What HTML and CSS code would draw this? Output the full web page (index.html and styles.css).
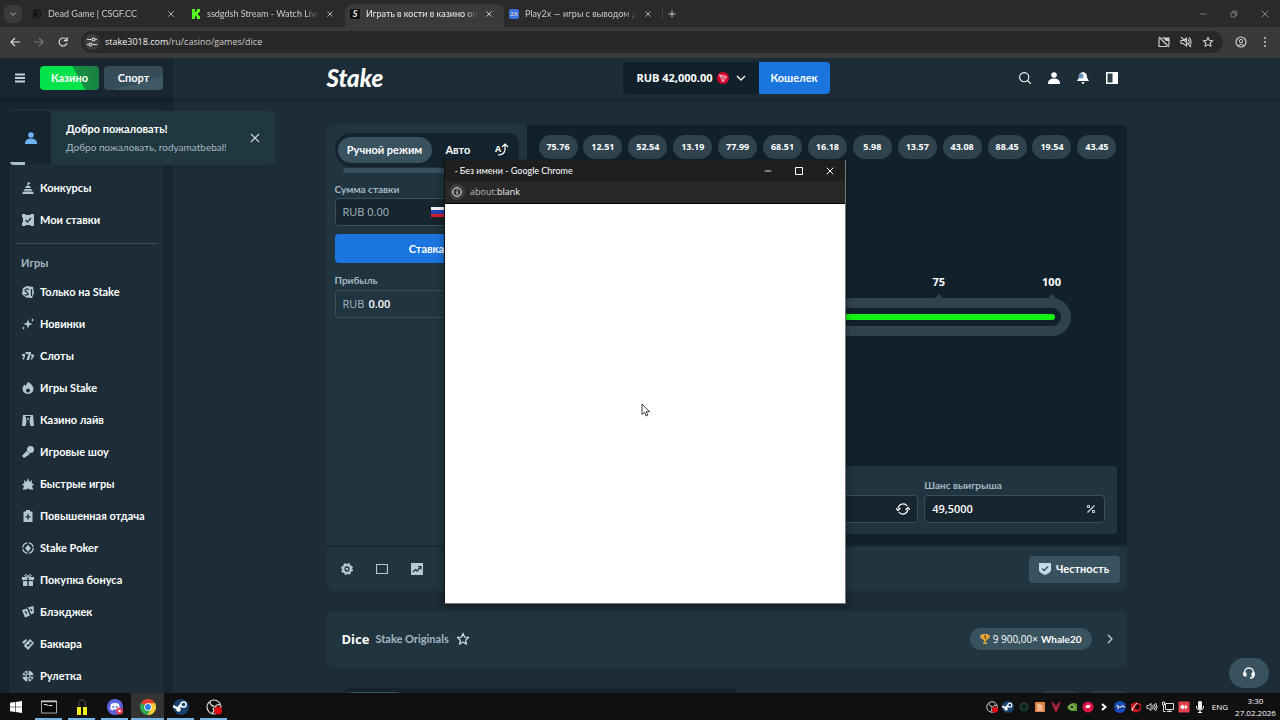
FILE: index.html
```html
<!DOCTYPE html>
<html lang="ru">

<head>
    <meta charset="UTF-8">
    <meta name="viewport" content="width=device-width, initial-scale=1.0">
    <title>Играть в кости в казино онлайн</title>
    <link rel="stylesheet" href="styles.css">
</head>

<body>
    <!-- shared icons -->
    <svg class="sprite" aria-hidden="true">
        <symbol id="i-close" viewBox="0 0 12 12"><path d="M2 2l8 8M10 2l-8 8" fill="none" stroke="currentColor" stroke-width="1.2"/></symbol>
        <symbol id="i-min" viewBox="0 0 12 12"><path d="M2 6h8" stroke="currentColor"/></symbol>
        <symbol id="i-chev" viewBox="0 0 12 12"><path d="M2 4l4 4 4-4" fill="none" stroke="currentColor" stroke-width="1.3"/></symbol>
        <symbol id="i-star" viewBox="0 0 12 12"><path d="M6 1.2l1.4 3.2 3.4.3-2.6 2.3.8 3.4L6 8.6l-3 1.8.8-3.4L1.2 4.7l3.4-.3z" fill="none" stroke="currentColor" stroke-width="1.1" stroke-linejoin="round"/></symbol>
        <symbol id="i-user" viewBox="0 0 12 12"><circle cx="6" cy="3" r="2.8"/><path d="M0 12c0-4 2.500-5.400 6-5.400S12 8 12 12z"/></symbol>
        <symbol id="i-steam" viewBox="0 0 16 16"><circle cx="8" cy="8" r="8" fill="#17426f"/><path d="M0 7l5 2.500 3-4" stroke="#fff" stroke-width="2.500" fill="none"/><circle cx="10.500" cy="5.500" r="2.600" fill="#17426f" stroke="#fff" stroke-width="1.500"/><circle cx="5.500" cy="10.500" r="2.200" fill="#fff"/></symbol>
        <symbol id="i-obs" viewBox="0 0 16 16"><circle cx="8" cy="8" r="7" fill="#111" stroke="#ddd" stroke-width="1.200"/><path d="M4 3c0 3 2 4 4.500 4.500M14 6c-3-1-4 0-5 3M6 14c2-1 2.500-3 1-5" fill="none" stroke="#ddd" stroke-width="1.300"/><circle cx="12" cy="11.500" r="4" fill="#e00b14"/></symbol>
    </svg>

    <div class="tabstrip">
        <button class="tab-search" aria-label="Поиск вкладок"><svg class="ico8"><use href="#i-chev"/></svg></button>
        <div class="tabs">
            <div class="tab">
                <svg class="favicon" viewBox="0 0 10 10"><path d="M1 2l4-2 4 2v6L5 10 1 8z" fill="#151515"/><path d="M3 3h4v4H5v2" stroke="#333" fill="none"/></svg>
                <span class="tab-title">Dead Game | CSGF.CC</span>
                <button class="tab-close" aria-label="Закрыть"><svg class="ico8"><use href="#i-close"/></svg></button>
            </div>
            <div class="tab">
                <svg class="favicon" viewBox="0 0 10 10"><path d="M1 0h3v3h1V2h1V0h3v3H8v1H7v2h1v1h1v3H6V8H5V7H4v3H1z" fill="#53fc18"/></svg>
                <span class="tab-title">ssdgdsh Stream - Watch Live o</span>
                <button class="tab-close" aria-label="Закрыть"><svg class="ico8"><use href="#i-close"/></svg></button>
            </div>
            <div class="tab active">
                <span class="favicon fav-stake">S</span>
                <span class="tab-title">Играть в кости в казино онла</span>
                <button class="tab-close" aria-label="Закрыть"><svg class="ico8"><use href="#i-close"/></svg></button>
            </div>
            <div class="tab">
                <span class="favicon fav-2x">2X</span>
                <span class="tab-title">Play2x — игры с выводом ден</span>
                <button class="tab-close" aria-label="Закрыть"><svg class="ico8"><use href="#i-close"/></svg></button>
            </div>
        </div>
        <button class="new-tab" aria-label="Новая вкладка"><svg class="ico10" viewBox="0 0 12 12"><path d="M6 2v8M2 6h8" stroke="currentColor" stroke-width="1.2"/></svg></button>
        <div class="win-controls">
            <button aria-label="Свернуть"><svg class="ico10"><use href="#i-min"/></svg></button>
            <button aria-label="Восстановить"><svg class="ico10" viewBox="0 0 12 12"><path d="M2.500 4.500h5v5h-5zM4.500 4.500v-2h5v5h-2" fill="none" stroke="currentColor"/></svg></button>
            <button aria-label="Закрыть окно"><svg class="ico10"><use href="#i-close"/></svg></button>
        </div>
    </div>

    <div class="toolbar">
        <button aria-label="Назад"><svg class="ico12" viewBox="0 0 12 12"><path d="M11 6H2M6 2L2 6l4 4" fill="none" stroke="#ddd" stroke-width="1.200"/></svg></button>
        <button aria-label="Вперёд"><svg class="ico12" viewBox="0 0 12 12"><path d="M1 6h9M6 2l4 4-4 4" fill="none" stroke="#777" stroke-width="1.200"/></svg></button>
        <button aria-label="Обновить"><svg class="ico12" viewBox="0 0 12 12"><path d="M9.600 4A4 4 0 1 0 10 7M10.200 1.200v3.400H6.800" fill="none" stroke="#ddd" stroke-width="1.200"/></svg></button>
        <div class="omnibox">
            <span class="site-info"><svg class="ico12" viewBox="0 0 12 12"><path d="M1 3.500h4M9.500 3.500H11M1 8.500h1.500M7 8.500h4" stroke="#ddd" stroke-width="1.200"/><circle cx="7.500" cy="3.500" r="1.500" fill="none" stroke="#ddd" stroke-width="1.200"/><circle cx="4.500" cy="8.500" r="1.500" fill="none" stroke="#ddd" stroke-width="1.200"/></svg></span>
            <span class="url"><b>stake3018.com</b>/ru/casino/games/dice</span>
            <svg class="ico12" viewBox="0 0 12 12"><path d="M1 2.500v8h8M3.500 2H11v7.500M1 1l10 10" fill="none" stroke="#ccc" stroke-width="1.200"/><path d="M5 2h6v3H8z" fill="#ccc"/></svg>
            <svg class="ico12" viewBox="0 0 12 12"><path d="M1 4.500h2L6.500 2v8L3 7.500H1zM8 3.500q2.500 2.500 0 5M9 1.500q4 4 .5 8.500M1 1l10 10" fill="none" stroke="#ccc" stroke-width="1.100"/></svg>
            <svg class="ico12"><use href="#i-star"/></svg>
        </div>
        <button aria-label="Профиль"><svg class="ico12" viewBox="0 0 12 12"><circle cx="6" cy="6" r="5" fill="none" stroke="#ccc" stroke-width="1.200"/><circle cx="6" cy="5" r="1.700" fill="none" stroke="#ccc"/><path d="M3 9.500q3-2.500 6 0" fill="none" stroke="#ccc"/></svg></button>
        <button aria-label="Меню"><svg class="ico12" viewBox="0 0 12 12"><circle cx="6" cy="2" r="1" fill="#ccc"/><circle cx="6" cy="6" r="1" fill="#ccc"/><circle cx="6" cy="10" r="1" fill="#ccc"/></svg></button>
    </div>

    <div class="site">
        <aside class="sidebar">
            <div class="sidebar-head">
                <button class="burger" aria-label="Меню"><svg class="ico10" viewBox="0 0 10 10"><path d="M0 1.500h10M0 5h10M0 8.500h10" stroke="#c3d3dc" stroke-width="2"/></svg></button>
                <a href="#" class="mode casino">Казино</a>
                <a href="#" class="mode sport">Спорт</a>
            </div>
            <nav class="sidebar-nav">
                <a href="#"><svg viewBox="0 0 12 12"><path d="M5.500 0L9 1.200 6.500 2.400V4H8l1 2H3l1-2h1.500zM2.600 7h6.800l.8 1.800H1.800zM1.400 9.600h9.200L12 12H0z"/></svg>Конкурсы</a>
                <a href="#"><svg viewBox="0 0 12 12"><path d="M0 0h3l1 1h4l1-1h3v12H9l-1-1H4l-1 1H0V9l1-1V4L0 3z"/><path d="M3.500 6l2 2 3.500-4" class="cut"/></svg>Мои ставки</a>
                <hr>
                <h2>Игры</h2>
                <a href="#"><svg viewBox="0 0 12 12"><path d="M1 2l4-2 6 1 1 6-2 5-6-.5L0 8z"/><path d="M7 3.500C4 2 1.500 4.500 4.500 6S6 10 2.500 8.500M9.500 3v7" class="cut"/></svg>Только на Stake</a>
                <a href="#"><svg viewBox="0 0 12 12"><path d="M6 1.500l1.200 3.300 3.300 1.200-3.300 1.200L6 10.500 4.800 7.200 1.500 6l3.300-1.200zM10.500 0l.5 1.500 1 .5-1 .5-.5 1.500-.5-1.500L9 2l1-.5zM1.500 8.500l.5 1 1 .5-1 .5-.5 1.500-.5-1.500L0 10l1-.5z"/></svg>Новинки</a>
                <a href="#"><svg viewBox="0 0 12 12"><path d="M3.500 2H9v1.500L7 10H4.500l2-6h-3zM0 4h3v2L2 9.500H.5L1.500 6H0zM9 4.500h3V6L10 9.500H8.500L10 6H9z"/></svg>Слоты</a>
                <a href="#"><svg viewBox="0 0 12 12"><path d="M5.500 0c3 1 6 4 6 7A5.500 5 0 0 1 .5 7c0-2 1-3.500 2-4.500l1 1.500C4 2.500 5.500 2 5.500 0z"/><circle cx="6" cy="8.500" r="2" class="hole"/></svg>Игры Stake</a>
                <a href="#"><svg viewBox="0 0 12 12"><path d="M1 1h10l1 11H8.500L7.500 8 8 3.500 9 2H3l1 1.500L4.500 8l-1 4H0z"/><path d="M5 4h2L6 7z"/></svg>Казино лайв</a>
                <a href="#"><svg viewBox="0 0 12 12"><circle cx="8.500" cy="3.500" r="3.500"/><path d="M4.500 5L8 8l-6 4-2-2z"/></svg>Игровые шоу</a>
                <a href="#"><svg viewBox="0 0 12 12"><path d="M6 0l1.500 4L10 2l-.3 3.500L12 6l-2 2.500 1.500 3H7.500Q6 9.500 4.500 11.500H.5l1.500-3L0 6l2.300-.5L2 2l2.500 2z"/></svg>Быстрые игры</a>
                <a href="#"><svg viewBox="0 0 12 12"><path d="M4 0h4v1.500h2.500V12h-9V1.500H4z"/><path d="M6 4v5.500M3.500 6.800h5" class="cut"/></svg>Повышенная отдача</a>
                <a href="#"><svg viewBox="0 0 12 12"><circle cx="6" cy="6" r="5.200" fill="none" stroke="currentColor" stroke-width="1.300" stroke-dasharray="6.600 1.560"/><path d="M6 2.700l3 3.500-1.500 1.800H7l.5 1.300h-3L5 8h-.5L3 6.200z"/></svg>Stake Poker</a>
                <a href="#"><svg viewBox="0 0 12 12"><path d="M0 3h5.300v3H0zM6.700 3H12v3H6.700zM1 7h4.300v5H1zM6.700 7H11v5H6.700z"/><path d="M6 3C2 3 2 .5 4 .7S6 3 6 3s0-2 2-2.300S10 3 6 3z" fill="none" stroke="currentColor"/></svg>Покупка бонуса</a>
                <a href="#"><svg viewBox="0 0 12 12"><path d="M0 4l5-1.500L8 9.500l-5 2zM5.500 1.500L11.500 0l.5 7-3 1.500L7 3z"/><path d="M3 5l2 3M8.500 3l1.500 2" class="cut"/></svg>Блэкджек</a>
                <a href="#"><svg viewBox="0 0 12 12"><path d="M0 4l4-3 1 1.500L2 6zM2.500 6.500L8 1l4 4-6 7-4-4z"/><path d="M5 7l1.500 1.500M8 4l1.500 1.500M6 8l3-3" class="cut"/></svg>Баккара</a>
                <a href="#"><svg viewBox="0 0 12 12"><circle cx="6" cy="6" r="5.500"/><path d="M6 0v3.500M6 8.500V12M0 6h3.500M8.500 6H12M2.500 2.500l1.800 1.800M7.700 7.700l1.800 1.800" class="cut"/><circle cx="6" cy="6" r="1.500" class="hole"/></svg>Рулетка</a>
            </nav>
        </aside>

        <div class="page">
            <header class="site-header">
                <div class="wrap header-row">
                    <a href="#" class="logo">Stake</a>
                    <div class="wallet">
                        <button class="balance">RUB 42,000.00
                            <svg class="ico12" viewBox="0 0 12 12"><circle cx="6" cy="6" r="6" fill="#d5042f"/><path d="M2.500 3l6 1.200 1.200 1L6 9.800zM6 9.500l.2-4 3-.8M2.500 3l3.700 2.500" fill="none" stroke="#fff" stroke-width=".7"/></svg>
                            <svg class="ico12"><use href="#i-chev"/></svg>
                        </button>
                        <button class="wallet-btn">Кошелек</button>
                    </div>
                    <div class="header-icons">
                        <button aria-label="Поиск"><svg class="ico12" viewBox="0 0 12 12"><circle cx="5.200" cy="5.200" r="4.600" fill="none" stroke="#fff" stroke-width="1.100"/><path d="M8.500 8.500L12 12" stroke="#fff" stroke-width="1.200"/></svg></button>
                        <button aria-label="Профиль"><svg class="ico12 white"><use href="#i-user"/></svg></button>
                        <button aria-label="Уведомления"><svg class="ico12" viewBox="0 0 12 12"><path d="M6 0c3 .5 4 2.500 4 5.500L12 9H0l2-3.500C2 2.500 3 .5 6 0zM4.500 10h3q-1.500 4-3 0z" fill="#fff"/><circle cx="4" cy="4" r="2.500" fill="#6a93c0"/></svg></button>
                        <button aria-label="Панель"><svg class="ico12" viewBox="0 0 12 12"><path d="M0 0h12v12H0z" fill="#fff"/><path d="M1.500 1.500h5v9h-5z" fill="#2c3f4a"/></svg></button>
                    </div>
                </div>
            </header>

            <main class="wrap main">
                <section class="game">
                    <div class="bet-panel">
                        <div class="bet-tabs">
                            <button class="pill">Ручной режим</button>
                            <button class="auto">Авто</button>
                            <button class="swap" aria-label="Расширенный режим"><svg viewBox="0 0 14 14"><text x="0" y="9">A</text><path d="M7 4l3-3 3 3M10 1v5q0 6-7 6" fill="none" stroke="#fff" stroke-width="1.200"/></svg></button>
                        </div>
                        <div class="hscroll"></div>
                        <label for="bet">Сумма ставки</label>
                        <div class="field">
                            <input id="bet" type="text" class="muted" value="RUB 0.00">
                            <span class="flag"></span>
                        </div>
                        <button class="bet-btn">Ставка</button>
                        <label for="profit">Прибыль</label>
                        <div class="field readonly"><span class="muted">RUB</span><output id="profit">0.00</output></div>
                    </div>
                    <div class="board">
                        <div class="results">
                            <button>75.76</button><button>12.51</button><button>52.54</button><button>13.19</button><button>77.99</button><button>68.51</button><button>16.18</button><button>5.98</button><button>13.57</button><button>43.08</button><button>88.45</button><button>19.54</button><button>43.45</button>
                        </div>
                        <div class="dice">
                            <div class="scale"><span>0</span><span>25</span><span>50</span><span>75</span><span>100</span></div>
                            <div class="rail"><input type="range" min="0" max="100" value="50" aria-label="Порог"></div>
                        </div>
                        <div class="params">
                            <div>
                                <label for="mult">Множитель</label>
                                <div class="field"><input id="mult" type="text" value="2,0000"><span>×</span></div>
                            </div>
                            <div>
                                <label for="roll">Бросок больше</label>
                                <div class="field"><input id="roll" type="text" value="50,50"><svg class="ico14" viewBox="0 0 14 14"><path d="M2.200 6.500a5 5 0 0 1 9-2.500M11.800 7.500a5 5 0 0 1-9 2.500M0 6l2 2.500L4.500 6M9.500 8L12 5.500 14 8" fill="none" stroke="#fff" stroke-width="1.200"/></svg></div>
                            </div>
                            <div>
                                <label for="chance">Шанс выигрыша</label>
                                <div class="field"><input id="chance" type="text" value="49,5000"><svg class="ico12" viewBox="0 0 12 12"><path d="M2.500 9.500l7-7" stroke="#ccd6dc" stroke-width="1.300"/><path d="M2.500 2.500h2v2h-2zM7.500 7.500h2v2h-2z" fill="none" stroke="#ccd6dc"/></svg></div>
                            </div>
                        </div>
                    </div>
                    <div class="game-footer">
                        <button aria-label="Настройки"><svg class="ico12" viewBox="0 0 12 12"><circle cx="6" cy="6" r="5" fill="#b3c9d5"/><circle cx="6" cy="6" r="5.200" fill="none" stroke="#b3c9d5" stroke-width="1.600" stroke-dasharray="2.400 1.680"/><circle cx="6" cy="6" r="2" fill="none" stroke="#20353f" stroke-width="1.300"/></svg></button>
                        <button aria-label="Режим театра"><svg class="ico12" viewBox="0 0 12 12"><path d="M.5 1.500h11v9H.5z" fill="none" stroke="#b3c9d5" stroke-width="1.200"/></svg></button>
                        <button aria-label="Статистика"><svg class="ico12" viewBox="0 0 12 12"><path d="M0 0h12v12H0z" fill="#b3c9d5"/><path d="M2 9l2.500-2.500L6 8l3.500-4M7 3.500h3v3" fill="none" stroke="#20353f" stroke-width="1.200"/></svg></button>
                        <button class="fair"><svg class="ico12" viewBox="0 0 12 12"><path d="M0 0h12v7.500Q11 10 6 12 1 10 0 7.500z" fill="#c3dbe8"/><path d="M3 5.500l2.200 2L9 3.500" fill="none" stroke="#385260" stroke-width="1.300"/></svg>Честность</button>
                    </div>
                </section>

                <section class="info">
                    <h1>Dice</h1>
                    <a href="#">Stake Originals</a>
                    <button class="fav" aria-label="В избранное"><svg class="ico14"><use href="#i-star"/></svg></button>
                    <button class="record"><svg class="ico10" viewBox="0 0 10 10"><path d="M2 0h6v1h2q0 4-3 4.500L5.700 7v1.500H7V10H3V8.500h1.300V7L3 5.500Q0 5 0 1h2z" fill="#e5a33c"/><path d="M4.300 2.200l1-.7V5" stroke="#64320e" fill="none"/></svg><span>9 900,00×</span><b>Whale20</b></button>
                    <button class="next" aria-label="Развернуть"><svg class="ico10" viewBox="0 0 10 10"><path d="M3 1l4 4-4 4" fill="none" stroke="currentColor" stroke-width="1.200"/></svg></button>
                </section>

                <section class="bottom-row">
                    <div class="bottom-tabs"><span></span></div>
                    <div class="bottom-nav"><i></i><i></i></div>
                </section>
            </main>
        </div>

        <div class="toast" role="status">
            <div class="toast-icon"><svg class="ico12 blue"><use href="#i-user"/></svg><i></i></div>
            <div class="toast-text"><strong>Добро пожаловать!</strong><span>Добро пожаловать, rodyamatbebal!</span></div>
            <button aria-label="Закрыть"><svg class="ico12"><use href="#i-close"/></svg></button>
        </div>

        <button class="support" aria-label="Поддержка"><svg class="ico12" viewBox="0 0 12 12"><path d="M1.500 7V5.500a4.500 4.500 0 0 1 9 0V9q0 2-3.500 2" fill="none" stroke="#fff" stroke-width="1.500"/><path d="M0 5.500h3.500v4H2q-2 0-2-2zM8.500 5.500H12v2q0 2-2 2H8.500z" fill="#fff"/></svg></button>
    </div>

    <div class="popup">
        <div class="popup-title">
            <span>· Без имени - Google Chrome</span>
            <button aria-label="Свернуть"><svg class="ico10"><use href="#i-min"/></svg></button>
            <button aria-label="Развернуть"><svg class="ico10" viewBox="0 0 10 10"><path d="M1.500 1.500h7v7h-7z" fill="none" stroke="currentColor"/></svg></button>
            <button aria-label="Закрыть"><svg class="ico10"><use href="#i-close"/></svg></button>
        </div>
        <div class="popup-address">
            <span class="site-info"><svg class="ico10" viewBox="0 0 10 10"><circle cx="5" cy="5" r="4.300" fill="none" stroke="#eee"/><path d="M5 4.500v3M5 2.500v1" stroke="#eee"/></svg></span>
            <span>about:<b>blank</b></span>
        </div>
        <div class="popup-body"></div>
    </div>

    <svg class="cursor" viewBox="0 0 10 14"><path d="M1 1v10.500l2.500-2.300 1.600 3.800 1.700-.8-1.600-3.500H8.500z" fill="#fff" stroke="#222" stroke-width=".9"/></svg>

    <div class="taskbar">
        <button class="start" aria-label="Пуск"><svg class="ico12" viewBox="0 0 12 12"><path d="M0 1.700l5-.7v4.700H0zM5.600.9L12 0v5.700H5.600zM0 6.300h5V11l-5-.7zM5.600 6.300H12V12l-6.400-.9z" fill="#fff"/></svg></button>
        <button class="app" aria-label="Терминал"><svg class="ico16" viewBox="0 0 16 16"><path d="M.5 2h15v12H.5z" fill="#050505" stroke="#aaa"/><path d="M0 2.500h16" stroke="#ccc" stroke-width="1.500"/><path d="M3 5.500h2M6 5v2M7.500 6.500h4" stroke="#eee"/></svg></button>
        <button class="app" aria-label="Hands"><svg class="ico16" viewBox="0 0 16 16"><path d="M3 8h4v8H3zM9 8h4v8H9z" fill="#f4ee12"/><path d="M5 7Q4 1 8 1t3 6" fill="none" stroke="#555"/></svg></button>
        <button class="app" aria-label="Discord"><svg class="ico16" viewBox="0 0 16 16"><circle cx="8" cy="8" r="8" fill="#5a62dd"/><path d="M4 5q4-2 8 0l1 5-2.500 1.500-1-1h-3l-1 1L3 10z" fill="#fff"/><circle cx="6.200" cy="8" r="1" fill="#5a62dd"/><circle cx="9.600" cy="8" r="1" fill="#5a62dd"/><circle cx="12.500" cy="12" r="3.500" fill="#ed3d55"/><circle cx="12.500" cy="12" r="1.300" fill="#fff"/></svg></button>
        <button class="app current" aria-label="Chrome"><svg class="ico16" viewBox="0 0 16 16"><circle cx="8" cy="8" r="8" fill="#2da94f"/><path d="M8 8L1.100 4A8 8 0 0 1 15 4z" fill="#e33b2e"/><path d="M8 4.200h7A8 8 0 0 1 7.500 16L11 9.500z" fill="#fcc934"/><circle cx="8" cy="8" r="3.800" fill="#fff"/><circle cx="8" cy="8" r="2.900" fill="#2f7de1"/></svg></button>
        <button class="app" aria-label="Steam"><svg class="ico16"><use href="#i-steam"/></svg></button>
        <button class="app" aria-label="OBS"><svg class="ico16"><use href="#i-obs"/></svg></button>
        <div class="tray">
            <svg class="ico12"><use href="#i-obs"/></svg>
            <svg class="ico12"><use href="#i-steam"/></svg>
            <svg class="ico12" viewBox="0 0 12 12"><circle cx="6" cy="6" r="4" fill="#15251d" stroke="#1b5836"/></svg>
            <svg class="ico12" viewBox="0 0 12 12"><path d="M1 1h10v10H1z" fill="#e08142"/><path d="M3 9h6M4 7h4V5H4zM6 5V3M3 4l2-1" fill="none" stroke="#ffe6cf"/></svg>
            <svg class="ico12" viewBox="0 0 12 12"><path d="M1 1l3 1 2 3 2-3 3-1-2 5-3 6-3-6z" fill="#a32336"/></svg>
            <svg class="ico12" viewBox="0 0 12 12"><path d="M1 6q5-6 10-3v7H6Q2 9 1 6z" fill="#5c9a2c"/><circle cx="6" cy="6" r="2" fill="#111" stroke="#b5de85"/></svg>
            <svg class="ico12" viewBox="0 0 12 12"><circle cx="6" cy="6" r="5.500" fill="#dc1444"/><path d="M3.500 7l1-3h4l-1 3z" fill="#fff"/></svg>
            <svg class="ico12" viewBox="0 0 12 12"><path d="M4 3l3.500 3L4 9" fill="none" stroke="#fff" stroke-width="2"/></svg>
            <svg class="ico12" viewBox="0 0 12 12"><circle cx="6" cy="6" r="6" fill="#1550c0"/><path d="M1 4h10v4H1z" fill="#0a2f86"/><path d="M2 5h3v2H3M7 7V5h3v2" fill="none" stroke="#fff"/></svg>
            <svg class="ico12" viewBox="0 0 12 12"><path d="M6 1l5 2v6l-5 3-5-3V3z" fill="#c4141c"/><path d="M7 2L2 8l1 2" fill="none" stroke="#fff"/><circle cx="7.500" cy="6" r="2.500" fill="#220808"/></svg>
            <svg class="ico12" viewBox="0 0 12 12"><path d="M1 4.500h1.500L5 2.500v7L2.500 7.500H1zM6.500 4q1.500 2 0 4M8 3q2.500 3 0 6M9.500 2q3 4 0 8" fill="none" stroke="#ddd"/></svg>
            <svg class="ico12" viewBox="0 0 12 12"><path d="M3.500 2.500h8v6h-8zM7.500 8.500v2M5 10.500h5M.5 1h2v3h-2zM1.500 4v6.500h2" fill="none" stroke="#ddd"/></svg>
            <svg class="ico12" viewBox="0 0 12 12"><path d="M.5.5h11v11H.5z" fill="#e2404c"/><path d="M2 6l2.500-2.500L7 6 4.500 8.500zM7 3.500L9.500 6 7 8.500" fill="#fff"/></svg>
            <svg class="ico12" viewBox="0 0 12 12"><rect x="4" y="0" width="4" height="8" rx="1.500" fill="#fff"/><path d="M2.500 5v1.500Q3 9 6 9t3.500-2.500V5M6 9v2.500M4 11.500h4" fill="none" stroke="#fff"/></svg>
        </div>
        <span class="lang">ENG</span>
        <time class="clock"><span>3:30</span><span>27.02.2026</span></time>
    </div>
</body>

</html>
```
FILE: styles.css
```css
* {
    box-sizing: border-box;
}

body {
    margin: 0;
    height: 100vh;
    display: flex;
    flex-direction: column;
    overflow: hidden;
    position: relative;
    background: #1c2d37;
    color: #fff;
    font: 11px/16px "Lato", "Roboto", sans-serif;
}

button,
input {
    font: inherit;
    color: inherit;
    background: none;
    border: 0;
    padding: 0;
}

button {
    display: flex;
    align-items: center;
    justify-content: center;
    cursor: pointer;
    white-space: nowrap;
}

a {
    color: inherit;
    text-decoration: none;
}

svg {
    flex: none;
}

.sprite {
    position: absolute;
    width: 0;
    height: 0;
}

.ico8 { width: 8px; height: 8px; }
.ico10 { width: 10px; height: 10px; }
.ico12 { width: 12px; height: 12px; }
.ico14 { width: 14px; height: 14px; }
.ico16 { width: 16px; height: 16px; }
.white { fill: #fff; }
.blue { fill: #6cb2f5; }

/* browser chrome */
.tabstrip {
    flex: none;
    height: 27px;
    display: flex;
    align-items: center;
    background: #2a2a2a;
    color: #ccc;
    font-size: 9px;
}

.tab-search {
    width: 18px;
    height: 18px;
    margin: 0 5px 0 4px;
    border-radius: 6px;
    background: #3a3a3a;
}

.tabs {
    display: flex;
    align-self: stretch;
}

.tab {
    width: 159px;
    height: 23px;
    margin-top: 4px;
    padding: 0 10px 4px 5px;
    display: flex;
    align-items: center;
    gap: 6px;
}

.tab.active {
    background: #3a3a3a;
    border-radius: 7px 7px 0 0;
    color: #eee;
}

.favicon {
    flex: none;
    width: 10px;
    height: 10px;
}

.fav-stake {
    background: #111;
    font: italic bold 9px/10px "Lato", sans-serif;
    text-align: center;
}

.fav-2x {
    background: #3c70e0;
    border-radius: 2px;
    font: bold 6px/10px "Open Sans", sans-serif;
    text-align: center;
}

.tab-title {
    flex: 1;
    min-width: 0;
    overflow: hidden;
    white-space: nowrap;
    -webkit-mask-image: linear-gradient(90deg, #000 88%, transparent);
    mask-image: linear-gradient(90deg, #000 88%, transparent);
}

.tab-close {
    width: 10px;
}

.new-tab {
    width: 18px;
    margin-left: -1px;
    border-left: 1px solid #444;
}

.win-controls {
    margin-left: auto;
    display: flex;
    color: #888;
}

.win-controls button {
    width: 31px;
}

.toolbar {
    flex: none;
    height: 31px;
    padding: 0 9px 2px;
    display: flex;
    align-items: center;
    gap: 12px;
    background: #3a3a3a;
}

.omnibox {
    flex: 1;
    height: 22px;
    padding: 0 9px 0 3px;
    display: flex;
    align-items: center;
    gap: 10px;
    border-radius: 11px;
    background: #282828;
    color: #ccc;
    font: 9px/16px "Open Sans", sans-serif;
}

.omnibox b,
.popup b {
    font-weight: 400;
    color: #f0f0f0;
}

.site-info {
    width: 16px;
    height: 16px;
    display: flex;
    align-items: center;
    justify-content: center;
    border-radius: 8px;
    background: #3c3c3c;
}

.url {
    flex: 1;
    margin-left: -5px;
}

/* site */
.site {
    flex: 1;
    min-height: 0;
    display: flex;
    position: relative;
    overflow: hidden;
}

.sidebar {
    flex: none;
    width: 173px;
    display: flex;
    flex-direction: column;
    background: #16252e;
}

.sidebar-head {
    flex: none;
    height: 40px;
    padding-left: 15px;
    display: flex;
    align-items: center;
    gap: 5px;
    background: #172630;
    box-shadow: 0 1px 3px #101c23;
}

.burger {
    margin-right: 10px;
}

.mode {
    width: 59px;
    height: 24px;
    border-radius: 4px;
    font-weight: 700;
    line-height: 24px;
    text-align: center;
}

.casino {
    background: linear-gradient(62deg, #05e34c 62%, #139144 64%, #1b7a41);
}

.sport {
    background: linear-gradient(165deg, #354c59 65%, #3f5967 67%);
}

.sidebar-nav {
    flex: 1;
    min-height: 0;
    margin: 11px 10px 0;
    padding-top: 63px;
    overflow: hidden;
    border-radius: 4px 4px 0 0;
    background: #1c2d37;
}

.sidebar-nav a {
    height: 32px;
    padding-left: 12px;
    display: flex;
    align-items: center;
    gap: 6px;
    font-weight: 700;
    white-space: nowrap;
}

.sidebar-nav svg {
    width: 12px;
    height: 12px;
    color: #b4c8d3;
    fill: currentColor;
}

.sidebar-nav .cut {
    fill: none;
    stroke: #1c2d37;
    stroke-width: 1.3;
}

.sidebar-nav .hole {
    fill: #1c2d37;
}

.sidebar-nav hr {
    margin: 7px 6px 6px;
    border: 0;
    border-top: 1px solid #3a4f5b;
}

.sidebar-nav h2 {
    margin: 0 0 0 11px;
    font-size: 11px;
    font-weight: 700;
    line-height: 26px;
    color: #a5b8c5;
}

.page {
    flex: 1;
    min-width: 0;
}

.wrap {
    max-width: 800px;
    margin: 0 auto;
}

.site-header {
    background: #1c2d37;
    box-shadow: 0 1px 3px #15232b;
}

.header-row {
    height: 40px;
    display: grid;
    grid-template-columns: 1fr auto 1fr;
    align-items: center;
}

.logo {
    font: italic 900 24px/32px "Lato", sans-serif;
}

.wallet {
    height: 32px;
    display: flex;
    font-weight: 700;
}

.balance {
    padding: 0 12px 0 13px;
    gap: 4px;
    border-radius: 4px 0 0 4px;
    background: #11212b;
    font-family: "Open Sans", sans-serif;
}

.balance svg + svg {
    margin-left: 2px;
}

.wallet-btn {
    width: 71px;
    border-radius: 0 4px 4px 0;
    background: #1a75de;
}

.header-icons {
    display: flex;
    justify-content: flex-end;
    gap: 17px;
    padding-right: 9px;
}

.main {
    padding-top: 27px;
}

.game {
    display: grid;
    grid-template-columns: minmax(0, 1fr) minmax(0, 3fr);
    border-radius: 5px;
    overflow: hidden;
    background: #1a2c35;
}

.bet-panel {
    padding: 8px;
    background: #20353f;
}

.bet-tabs {
    height: 34px;
    padding: 0 10px 0 3px;
    display: flex;
    align-items: center;
    border-radius: 17px 10px 10px 17px;
    background: #14242e;
    font-weight: 700;
}

.pill {
    width: 94px;
    height: 26px;
    border-radius: 13px;
    background: #385260;
}

.auto {
    padding: 0 14px;
}

.swap {
    margin-left: auto;
}

.swap svg {
    width: 14px;
    height: 14px;
    fill: #fff;
    font: bold 9px "Open Sans", sans-serif;
}

.hscroll {
    height: 5px;
    margin: 1px 0 8px 8px;
    border-radius: 3px;
    background: #35505e;
}

label {
    display: block;
    height: 17px;
    font-size: 10px;
    font-weight: 700;
    line-height: 16px;
    color: #a5b8c5;
}

.field {
    height: 28px;
    padding: 0 7px;
    display: flex;
    align-items: center;
    gap: 4px;
    border: 1px solid #35505e;
    border-radius: 4px;
    background: #17252e;
    font-family: "Open Sans", sans-serif;
}

.field input {
    flex: 1;
    min-width: 0;
}

.field .muted {
    color: #a5b8c5;
}

.readonly {
    margin-top: 1px;
    background: #20353f;
    font-weight: 600;
}

.readonly .muted {
    font-weight: 400;
}

.flag {
    width: 16px;
    height: 10px;
    margin-right: 64px;
    background: linear-gradient(#f4f4f4 33%, #2443b0 33% 66%, #d21f2c 66%);
}

.bet-btn {
    width: 100%;
    height: 29px;
    margin: 8px 0 9px;
    border-radius: 4px;
    background: #1a75de;
    font-weight: 700;
}

.board {
    display: flex;
    flex-direction: column;
    padding: 10px 10px 11px 12px;
    background: #11212b;
}

.results {
    display: flex;
    justify-content: space-between;
}

.results button {
    width: 39px;
    height: 24px;
    border-radius: 12px;
    background: #2f434f;
    font: 700 9px/16px "Open Sans", sans-serif;
}

.dice {
    margin: 115px 0 130px;
    padding: 0 46px 0 43px;
    font-family: "Open Sans", sans-serif;
}

.scale {
    display: flex;
    justify-content: space-between;
    padding: 0 9px;
    font-weight: 700;
}

.scale span {
    width: 20px;
    text-align: center;
}

.scale span::after {
    content: "";
    display: block;
    width: 0;
    margin: 4px auto 0;
    border: 4px solid transparent;
    border-top-width: 0;
    border-bottom-color: #2f434f;
}

.rail {
    height: 38px;
    padding: 0 6px;
    display: flex;
    align-items: center;
    border: 10px solid #2f434f;
    border-radius: 19px;
}

.rail input {
    appearance: none;
    flex: 1;
    min-width: 0;
    height: 6px;
    margin: 0;
    border-radius: 3px;
    background: linear-gradient(90deg, #e9113c 50%, #12f312 50%);
}

.rail input::-webkit-slider-thumb {
    appearance: none;
    width: 18px;
    height: 18px;
    border-radius: 3px;
    background: #2f8af5;
}

.params {
    padding: 11px;
    display: grid;
    grid-template-columns: repeat(3, minmax(0, 1fr));
    gap: 6px;
    border-radius: 4px;
    background: #20353f;
}

.params label {
    height: 18px;
}

.params input {
    font-weight: 600;
}

.game-footer {
    grid-column: 1 / -1;
    height: 44px;
    margin-top: 2px;
    padding: 0 7px 0 14px;
    display: flex;
    align-items: center;
    gap: 23px;
    background: #20353f;
}

.fair {
    width: 91px;
    height: 27px;
    margin-left: auto;
    gap: 5px;
    border-radius: 4px;
    background: #385260;
    font-weight: 700;
}

.info {
    height: 56px;
    margin-top: 20px;
    padding: 0 12px 0 15px;
    display: flex;
    align-items: center;
    border-radius: 5px;
    background: #20353f;
}

.info h1 {
    margin: 0 6px 0 0;
    font: 700 13px/16px "Open Sans", sans-serif;
}

.info a {
    color: #a5b8c5;
    font-weight: 700;
}

.fav {
    margin-left: 7px;
    color: #c7d8e2;
}

.record {
    height: 22px;
    margin-left: auto;
    padding: 0 10px;
    gap: 3px;
    border-radius: 11px;
    background: #385260;
    font: 10px/16px "Open Sans", sans-serif;
}

.record b {
    font-family: "Lato", sans-serif;
}

.next {
    margin-left: 13px;
    color: #c7d8e2;
}

.bottom-row {
    margin-top: 21px;
    padding-left: 7px;
    display: flex;
    justify-content: space-between;
}

.bottom-tabs {
    width: 52%;
    height: 40px;
    padding: 4px;
    border-radius: 20px;
    background: #14232c;
}

.bottom-tabs span {
    display: block;
    width: 72px;
    height: 30px;
    border-radius: 15px;
    background: #385260;
}

.bottom-nav {
    display: flex;
    gap: 12px;
    padding-top: 3px;
}

.bottom-nav i {
    width: 36px;
    height: 30px;
    border-radius: 4px;
    background: #263944;
}

.toast {
    position: absolute;
    left: 10px;
    top: 53px;
    width: 265px;
    height: 54px;
    display: flex;
    align-items: center;
    border-radius: 4px;
    overflow: hidden;
    background: #20373f;
}

.toast-icon {
    align-self: stretch;
    width: 41px;
    display: flex;
    align-items: center;
    justify-content: center;
    position: relative;
    background: #17252e;
}

.toast-icon i {
    position: absolute;
    left: 0;
    bottom: 0;
    width: 15px;
    height: 3px;
    background: #a9bfcb;
}

.toast-text {
    flex: 1;
    padding-left: 15px;
    display: flex;
    flex-direction: column;
    gap: 2px;
    font-size: 10px;
    color: #a5b8c5;
    white-space: nowrap;
}

.toast-text strong {
    color: #fff;
    font-size: 11px;
}

.toast button {
    margin-right: 14px;
    color: #c7d8e2;
}

.support {
    position: absolute;
    right: 11px;
    bottom: 5px;
    width: 40px;
    height: 30px;
    border-radius: 15px;
    background: #385260;
}

/* popup window */
.popup {
    position: absolute;
    left: 444px;
    top: 160px;
    width: 402px;
    height: 444px;
    display: flex;
    flex-direction: column;
    border: 1px solid #111;
    border-top: 0;
    border-color: #111 #777 #777 #111;
    background: #282828;
    box-shadow: 0 3px 8px rgba(0, 0, 0, 0.4);
    font-size: 9px;
}

.popup-title {
    height: 21px;
    padding-left: 10px;
    display: flex;
    align-items: center;
    background: #1f1f1f;
}

.popup-title span {
    margin-right: auto;
}

.popup-title button {
    width: 31px;
}

.popup-address {
    height: 23px;
    padding-left: 4px;
    display: flex;
    align-items: center;
    gap: 5px;
    border-bottom: 1px solid #000;
    color: #bbb;
    font-family: "Open Sans", sans-serif;
}

.popup-body {
    flex: 1;
    background: #fff;
}

.cursor {
    position: absolute;
    left: 641px;
    top: 403px;
    width: 10px;
    height: 14px;
}

/* taskbar */
.taskbar {
    flex: none;
    height: 27px;
    display: flex;
    align-items: center;
    background: #101010;
    font: 8px/12px "Open Sans", sans-serif;
}

.start {
    width: 32px;
}

.app {
    width: 33px;
    height: 27px;
    background: linear-gradient(#76b5e8, #76b5e8) center bottom / 27px 2px no-repeat;
}

.app.current {
    background-color: #333;
    background-size: 100% 2px;
}

.tray {
    margin-left: auto;
    display: flex;
    gap: 4px;
}

.lang {
    width: 28px;
    text-align: center;
}

.clock {
    width: 43px;
    margin-right: 3px;
    display: flex;
    flex-direction: column;
    text-align: center;
}
```
